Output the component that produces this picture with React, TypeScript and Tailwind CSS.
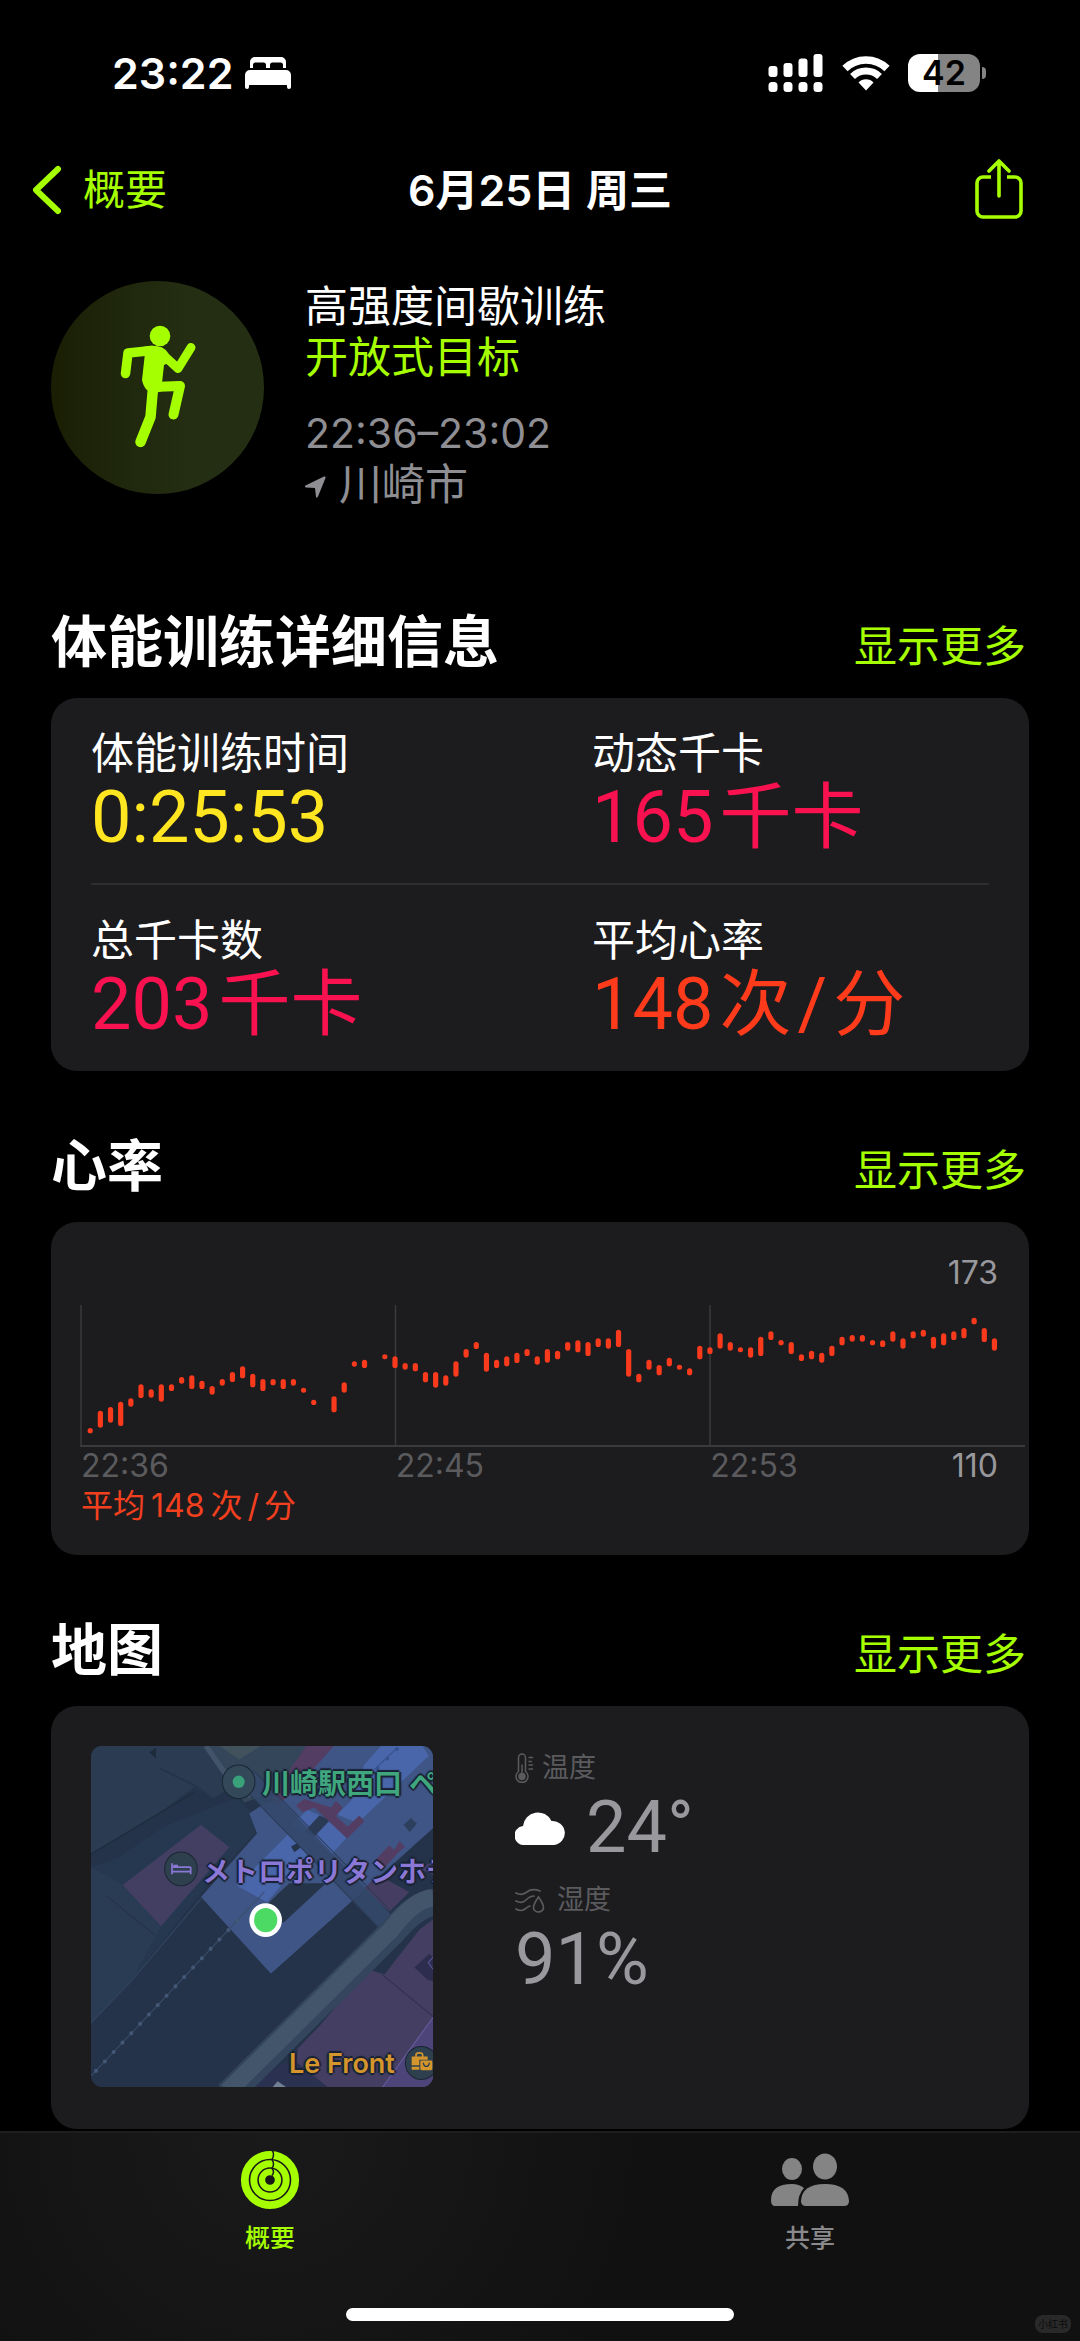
import React from "react";

/* Heart-rate ranges per sample: [top, bottom] in chart units; null marks a missing sample. */
const SAMPLES: ([number, number] | null)[] = [
  [369, 385], [317, 368], [306, 353], [290, 363], [280, 305], [238, 279], [253, 278], [238, 290], [238, 258], [216, 236],
  [211, 252], [227, 252], [243, 269], [222, 242], [201, 231], [184, 220], [206, 247], [222, 258], [222, 241], [222, 252],
  [222, 242], [248, 263], [284, 300], null, [274, 322], [232, 263], [169, 185], [164, 189], null, [148, 163],
  [154, 189], [174, 194], [174, 199], [201, 232], [201, 248], [211, 242], [169, 215], [132, 158], [111, 132], [143, 200],
  [164, 189], [154, 184], [143, 174], [132, 153], [154, 179], [132, 173], [137, 163], [111, 137], [106, 142], [111, 153],
  [100, 126], [100, 131], [74, 126], [132, 215], [206, 232], [164, 194], [180, 211], [158, 184], [179, 194], [190, 211],
  [122, 163], [127, 147], [85, 131], [111, 137], [127, 142], [127, 158], [95, 153], [79, 105], [105, 121], [111, 147],
  [148, 168], [137, 163], [143, 173], [122, 153], [95, 121], [90, 110], [90, 110], [105, 121], [106, 126], [79, 110],
  [100, 131], [79, 100], [74, 95], [95, 131], [85, 121], [79, 105], [69, 100], [38, 58], [69, 111], [100, 137],
];

function BedIcon() {
  return (
    <svg viewBox="0 0 46 32" className="h-8 w-[46px]" fill="#fff" aria-hidden="true">
      <path d="M5 11V5a5 5 0 0 1 5-5h26a5 5 0 0 1 5 5v6h-3V8q0-2.500-2.500-2.500h-8Q25 5.500 25 8v3h-4V8q0-2.500-2.500-2.500h-8Q8 5.500 8 8v3z" />
      <path d="M5 13h36a5 5 0 0 1 5 5v12a2 2 0 0 1-4 0v-2H4v2a2 2 0 0 1-4 0V18a5 5 0 0 1 5-5z" />
    </svg>
  );
}

function SignalIcon() {
  return (
    <svg viewBox="0 0 56 38" className="h-[38px] w-14" fill="#fff" aria-hidden="true">
      <rect x="0.500" y="12" width="9" height="11" rx="3" />
      <rect x="15.500" y="9" width="9" height="14" rx="3" />
      <rect x="30.500" y="4.500" width="9" height="18.500" rx="3" />
      <rect x="45.500" y="0" width="9" height="23" rx="3" />
      <rect x="0.500" y="28" width="9" height="10" rx="3.500" />
      <rect x="15.500" y="28" width="9" height="10" rx="3.500" />
      <rect x="30.500" y="28" width="9" height="10" rx="3.500" />
      <rect x="45.500" y="28" width="9" height="10" rx="3.500" />
    </svg>
  );
}

function WifiIcon() {
  return (
    <svg viewBox="0 0 48 36" className="h-9 w-12" aria-hidden="true">
      <path d="M3 13.500A30 30 0 0 1 45 13.500" fill="none" stroke="#fff" strokeWidth="7.500" />
      <path d="M10.500 21.500A19.500 19.500 0 0 1 37.500 21.500" fill="none" stroke="#fff" strokeWidth="7" />
      <path d="M16.500 27.500A10.500 10.500 0 0 1 31.500 27.500L24 35.500z" fill="#fff" />
    </svg>
  );
}

function Battery() {
  return (
    <div className="flex items-center gap-[2px]">
      <div className="flex h-[38px] w-[72px] items-center justify-center rounded-[12px] bg-[linear-gradient(90deg,#fff_42%,#848484_42%)] text-[34px] leading-[38px] font-semibold text-black">
        42
      </div>
      <div className="h-3 w-1 rounded-r-full bg-[#848484]" />
    </div>
  );
}

function Runner() {
  return (
    <svg viewBox="0 0 213 213" className="size-full" fill="none" stroke="#a6ff00" strokeLinecap="round" strokeLinejoin="round" aria-hidden="true">
      <circle cx="109" cy="55" r="10.300" fill="#a6ff00" stroke="none" />
      <path d="M74.500 92.500L77 72L101 69.500" strokeWidth="9.500" />
      <path d="M109 71L127 87.500L140 66.500" strokeWidth="9" />
      <path d="M92 66q19-4 25 6l5 8-9 4-2 18q8 6-3 9-14 3-17-12l3-27z" fill="#a6ff00" stroke="none" />
      <path d="M101 106L129 105L122.500 133.500" strokeWidth="10" />
      <path d="M102 107L99.500 136L89.500 161" strokeWidth="10.500" />
    </svg>
  );
}

type StatProps = { label: string; value: React.ReactNode; color: string };

function Stat({ label, value, color }: StatProps) {
  return (
    <div className="pt-[30px] pb-[25px]">
      <dt className="text-[43px] leading-[50px]">{label}</dt>
      <dd className={"font-[Roboto,'Noto_Sans_CJK_SC',sans-serif] text-[72px] leading-[80px] whitespace-nowrap " + color}>{value}</dd>
    </div>
  );
}

function Section({ title, children }: { title: string; children: React.ReactNode }) {
  return (
    <section className="px-[51px] pt-[55px]">
      <div className="flex items-baseline justify-between pb-4">
        <h2 className="text-[56px] leading-[80px] font-semibold">{title}</h2>
        <a href="#more" className="pr-[3px] text-[43px] leading-[50px] text-[#a6ff00]">显示更多</a>
      </div>
      <div className="rounded-[26px] bg-[#1c1c1e]">{children}</div>
    </section>
  );
}

function HeartChart() {
  return (
    <svg viewBox="0 0 945 142" className="block h-auto w-full" role="img" aria-label="心率">
      <path d="M1 0V142M315.500 0V142M630 0V142" stroke="#3a3a3c" strokeWidth="1.500" />
      <path d="M0 141H945" stroke="#3a3a3c" strokeWidth="2" />
      {SAMPLES.map((s, i) =>
        s ? (
          <rect key={i} x={7.6 + i * 10.16} y={s[0] / 3} width={5.200} height={(s[1] - s[0]) / 3} rx={2.600} fill="#fa3a1c" />
        ) : null,
      )}
    </svg>
  );
}

const LABEL_EDGE = "[text-shadow:2px_0_1px_#182232,-2px_0_1px_#182232,0_2px_1px_#182232,0_-2px_1px_#182232]";

function CityMap() {
  return (
    <div className="relative h-[341px] w-[342px] shrink-0 overflow-hidden rounded-[11px] bg-[#243349]">
      <svg viewBox="180 426 1026 991" preserveAspectRatio="none" className="absolute inset-0 size-full" aria-hidden="true">
        <path d="M180 426H530L600 545 545 580 490 545 380 625 180 740z" fill="#2b3c52" />
        <path d="M180 740L490 560" stroke="#202d3f" strokeWidth="4" />
        <path d="M385 490L500 545 545 582 650 530" fill="none" stroke="#243448" strokeWidth="5" />
        <path d="M530 426H830L730 560 640 590 600 540z" fill="#33465a" />
        <path d="M565 426H690L625 465z" fill="#42525c" />
        <path d="M525 426L600 530 660 570" fill="none" stroke="#42546a" strokeWidth="16" />
        <path d="M355 445L375 430V462z" fill="#1e2b3c" />
        <path d="M180 778L255 755 275 830 390 950 405 945 480 880 300 1110 180 1230z" fill="#2a3c54" />
        <path d="M180 778L255 755 400 660 620 575 680 640 670 680 500 865 300 1110 390 950 275 830z" fill="#263850" />
        <path d="M180 1230L300 1110 510 870" fill="none" stroke="#31435c" strokeWidth="4" />
        <path d="M225 860L370 975" stroke="#233247" strokeWidth="3" />
        <path d="M510 655L595 720 390 950 275 830z" fill="#433f63" />
        <path d="M510 865L678 680 655 622 690 600 740 580 860 426H1206V665L720 1088z" fill="#3f5585" />
        <path d="M712 882L775 825 885 825 762 935 745 945z" fill="#263449" />
        <path d="M618 832L772 682 835 735 708 880z" fill="#4966ab" />
        <path d="M780 655L830 612 868 628 820 675z" fill="#4966ab" />
        <path d="M845 692L895 645 948 692 900 742z" fill="#4966ab" />
        <path d="M918 625L960 585 1000 480 1050 426H1175L1193 455 980 650z" fill="#4966ab" />
        <path d="M820 675L865 628 897 640 850 690z" fill="#2a3a55" />
        <path d="M780 718L800 708 808 722 790 735z" fill="#263449" />
        <path d="M1118 655L1140 635 1158 652 1136 676z" fill="#2c3f5c" />
        <path d="M825 426H908L800 545 740 600 720 575z" fill="#533d62" />
        <path d="M795 600L820 580 900 605 915 585 935 605 915 630 950 660 985 628 1000 645 948 695 850 605 815 618z" fill="#533d62" />
        <path d="M1030 760L1075 715 1090 728 1105 702 1122 718 1100 738 1060 780z" fill="#533d62" />
        <path d="M1206 710L1165 735 1135 770 1206 800z" fill="#463f6a" />
        <path d="M1206 672L720 1088 800 1090 1010 880 1206 760z" fill="#243349" />
        <path d="M1000 840L1040 800 1135 850 1075 908z" fill="#463e62" />
        <path d="M640 510L1110 985" stroke="#34486b" strokeOpacity=".9" strokeWidth="54" />
        <path d="M618 530L1085 995M665 495L1135 960" stroke="#2a3b55" strokeWidth="3" />
        <path d="M1206 930L1165 960 1060 1090 1010 1075 870 1235 800 1305 790 1417H1206z" fill="#433e62" />
        <path d="M790 1340L700 1370 660 1417H890z" fill="#2b3150" />
        <path d="M740 1400L765 1417H725z" fill="#718092" />
        <path d="M1206 1215L1055 1417H1206z" fill="#4d4479" />
        <path d="M1206 1215L1055 1417" stroke="#6a5fa0" strokeWidth="3" />
        <path d="M1055 1092L1206 1212" stroke="#322e50" strokeWidth="3" />
        <path d="M1150 1070L1195 1030 1206 1040V1110L1190 1105z" fill="#2d2e4f" />
        <path d="M1206 1040L1192 1055 1206 1075" fill="none" stroke="#5d57a0" strokeWidth="3" />
        <path d="M590 1440L1085 965Q1150 890 1206 880" fill="none" stroke="#34465d" strokeWidth="80" />
        <path d="M590 1430L1080 960Q1150 870 1206 868" fill="none" stroke="#43556a" strokeWidth="52" />
        <path d="M180 1385L700 850" stroke="#3a4e6b" strokeWidth="3" />
        <path d="M195 1370L620 932" stroke="#435876" strokeWidth="12" strokeLinecap="round" strokeDasharray="0 38" />
        <path d="M960 560L1100 430" stroke="#35508c" strokeWidth="3" />
        <path d="M1040 490L1105 428" stroke="#35508c" strokeWidth="11" strokeLinecap="round" strokeDasharray="0 40" />
        <circle cx="623" cy="530" r="49" fill="#334859" stroke="#1a2633" strokeWidth="3" />
        <circle cx="623" cy="530" r="18" fill="#3aa27a" />
        <circle cx="450" cy="783" r="49" fill="#2e404e" stroke="#1a2633" strokeWidth="3" />
        <path d="M423 767V799M423 778H479M423 791H479M479 778V799" fill="none" stroke="#8b77d6" strokeWidth="5" />
        <path d="M427 771H441V778H427z" fill="#8b77d6" />
        <circle cx="1171" cy="1347" r="48" fill="#2e404e" stroke="#1a2633" strokeWidth="3" />
        <path d="M1142 1328H1190V1338H1165V1354H1142zM1142 1358H1165V1367H1142z" fill="#d4952c" />
        <path d="M1155 1330V1324Q1155 1318 1165 1318T1175 1324V1330" fill="none" stroke="#d4952c" strokeWidth="5" />
        <rect x="1168" y="1340" width="36" height="28" rx="4" fill="#d4952c" />
        <path d="M1177 1346Q1178 1357 1186 1357T1195 1346" fill="none" stroke="#2e404e" strokeWidth="4" />
        <circle cx="704" cy="932" r="49" fill="#fff" />
        <circle cx="704" cy="932" r="35" fill="#4cd964" />
      </svg>
      <span className={"absolute top-[18px] left-[171px] text-[28px] leading-10 font-semibold whitespace-nowrap text-[#3fa67e] " + LABEL_EDGE}>川崎駅西口 ペ</span>
      <span className={"absolute top-[106px] left-[111px] text-[28px] leading-10 font-semibold whitespace-nowrap text-[#8b77d6] " + LABEL_EDGE}>メトロポリタンホテ</span>
      <span className={"absolute top-[298px] left-[198px] text-[27px] leading-10 font-semibold whitespace-nowrap text-[#d4952c] " + LABEL_EDGE}>Le Front</span>
    </div>
  );
}

function ThermometerIcon() {
  return (
    <svg viewBox="0 0 19 30" className="h-[30px] w-[19px]" fill="none" stroke="#5b5b5e" strokeWidth="1.500" strokeLinecap="round" aria-hidden="true">
      <path d="M3.500 18.500V4.500a3.500 3.500 0 0 1 7 0v14a6 6 0 1 1-7 0z" />
      <circle cx="7" cy="23.500" r="3" fill="#5b5b5e" />
      <path d="M7 20V12M14 4.500h3.500M14 8.500h2.500M14 12h3.500M14 16h3.500" />
    </svg>
  );
}

function HumidityIcon() {
  return (
    <svg viewBox="0 0 30 26" className="h-[26px] w-[30px]" fill="none" stroke="#5b5b5e" strokeWidth="1.700" strokeLinecap="round" aria-hidden="true">
      <path d="M1 6q6 3 11-1t13-1M1 14q6 3 10-1t8-4M1 22q5 3 9 0t5-3" />
      <path d="M23.500 10q-5 7-5 10.500a5 4.500 0 0 0 10 0Q28.500 17 23.500 10z" />
    </svg>
  );
}

export default function App() {
  return (
    <div lang="zh-CN" className="relative flex min-h-screen flex-col bg-black font-[Inter,'Noto_Sans_CJK_SC',sans-serif] text-white">
      <div className="flex items-center justify-between pt-11 pr-[94px] pl-[112px] leading-[58px]">
        <div className="flex items-center gap-3">
          <span className="text-[43px] font-semibold">23:22</span>
          <BedIcon />
        </div>
        <div className="flex items-center gap-[18px]">
          <SignalIcon />
          <WifiIcon />
          <Battery />
        </div>
      </div>

      <header className="mt-10 grid h-24 grid-cols-[1fr_auto_1fr] items-center px-8">
        <a href="#summary" className="flex items-center gap-[21px] text-[42px] leading-[50px] text-[#a6ff00]">
          <svg viewBox="0 0 30 50" className="h-[50px] w-[30px]" fill="none" stroke="#a6ff00" strokeWidth="6" strokeLinecap="round" strokeLinejoin="round" aria-hidden="true">
            <path d="M26 4L4 25 26 46" />
          </svg>
          概要
        </a>
        <h1 className="text-[43px] leading-[50px] font-semibold">6月25日 周三</h1>
        <button type="button" aria-label="共享体能训练" className="mr-6 justify-self-end">
          <svg viewBox="0 0 50 62" className="h-[62px] w-[50px]" fill="none" stroke="#a6ff00" strokeWidth="3.600" strokeLinecap="round" strokeLinejoin="round" aria-hidden="true">
            <path d="M17 18H9a6 6 0 0 0-6 6v28a6 6 0 0 0 6 6h32a6 6 0 0 0 6-6V24a6 6 0 0 0-6-6h-8" strokeLinecap="butt" />
            <path d="M25 37V2M15 12L25 2 35 12" />
          </svg>
        </button>
      </header>

      <main>
        <div className="flex gap-[41px] px-[51px] pt-[43px]">
          <div className="size-[213px] shrink-0 rounded-full bg-[linear-gradient(90deg,#1a1f04,#242e13_65%)]">
            <Runner />
          </div>
          <div className="text-[43px] leading-[51px]">
            <p>高强度间歇训练</p>
            <p className="text-[#a6ff00]">开放式目标</p>
            <p className="pt-[25px] text-[41px] text-[#8e8e93]">22:36–23:02</p>
            <p className="flex items-center gap-[13px] text-[#8e8e93]">
              <svg viewBox="0 0 21 22" className="mt-1 h-[22px] w-[21px]" fill="#8e8e93" aria-hidden="true">
                <path d="M19 .5Q21 0 20.500 2L13 20.500q-1 2-2 .5L10 12 1 11.500q-2-.5-.5-2z" />
              </svg>
              川崎市
            </p>
          </div>
        </div>

        <div className="pt-[37px]">
          <Section title="体能训练详细信息">
            <dl className="px-10 pb-px">
              <div className="grid grid-cols-2 gap-x-26 border-b-2 border-[#2e2e30]">
                <Stat label="体能训练时间" value="0:25:53" color="text-[#ffe620]" />
                <Stat label="动态千卡" value={<>165<span className="ml-[6px]">千卡</span></>} color="text-[#fa114f]" />
              </div>
              <div className="grid grid-cols-2 gap-x-26">
                <Stat label="总千卡数" value={<>203<span className="ml-[6px]">千卡</span></>} color="text-[#fa114f]" />
                <Stat
                  label="平均心率"
                  value={<>148<span className="ml-[6px]">次</span><span className="mx-[6px]">/</span>分</>}
                  color="text-[#ff3b1c]"
                />
              </div>
            </dl>
          </Section>
        </div>

        <Section title="心率">
          <div className="pt-[31px] pr-1 pb-7 pl-[29px]">
            <p className="pr-[27px] pb-3 text-right text-[32px] leading-10 text-[#98989d]">173</p>
            <HeartChart />
            <div className="grid grid-cols-3 pl-px text-[32px] leading-[38px] text-[#5b5b5e]">
              <span>22:36</span>
              <span>22:45</span>
              <span className="flex justify-between pr-[27px]">
                22:53
                <span className="text-[#98989d]">110</span>
              </span>
            </div>
            <p className="pl-px text-[32px] leading-[42px] text-[#f2401f]">
              平均<span className="mx-[6px]">148</span>次<span className="mx-[5px]">/</span>分
            </p>
          </div>
        </Section>

        <Section title="地图">
          <div className="flex gap-[82px] px-10 pt-10 pb-[42px]">
            <CityMap />
            <dl className="flex flex-col pt-[2px] text-[27px] leading-10 text-[#5b5b5e]">
              <dt className="flex items-center gap-2">
                <ThermometerIcon />
                温度
              </dt>
              <dd className="flex items-center gap-5 font-[Roboto,sans-serif] text-[72px] leading-[80px] text-[#98989d]">
                <svg viewBox="0 0 51 34" className="h-[34px] w-[51px]" fill="#fff" aria-hidden="true">
                  <path d="M10 34a9.500 9.500 0 0 1-2-19A15 15 0 0 1 36.500 10 12 12 0 0 1 39 34z" />
                </svg>
                24°
              </dd>
              <dt className="mt-3 flex items-center gap-3">
                <HumidityIcon />
                湿度
              </dt>
              <dd className="font-[Roboto,sans-serif] text-[72px] leading-[80px] text-[#98989d]">91%</dd>
            </dl>
          </div>
        </Section>
      </main>

      <footer className="relative mt-[2px] flex grow flex-col justify-between border-t-2 border-[#1e1e1f] bg-[radial-gradient(circle_at_25%_0%,#1a1a1b,#111112_45%)] pb-5">
        <nav className="grid grid-cols-2 pt-[17px] text-[25px] leading-9 font-medium">
          <a href="#summary" className="flex flex-col items-center gap-[10px] text-[#a6ff00]">
            <svg viewBox="0 0 60 60" className="size-[60px]" fill="none" aria-hidden="true">
              <circle cx="30" cy="30" r="25.200" stroke="#a6ff00" strokeWidth="7.800" />
              <circle cx="30" cy="30" r="16.200" stroke="#a6ff00" strokeWidth="7" />
              <circle cx="30" cy="30" r="8" stroke="#a6ff00" strokeWidth="6.300" />
              <path d="M32 0q3 4.500 0 9.500M32 9.500q3 4.500 0 9M32 18.500q3 3.500 0 7" stroke="#17191a" strokeWidth="1.500" />
            </svg>
            概要
          </a>
          <a href="#sharing" className="flex flex-col items-center gap-[10px] text-[#8a8a8c]">
            <svg viewBox="0 0 78 60" className="h-[60px] w-[78px]" fill="#848484" aria-hidden="true">
              <ellipse cx="21" cy="19" rx="10" ry="11" />
              <ellipse cx="54" cy="16.500" rx="12" ry="13" />
              <path d="M0 50Q0 34 21 34q7 0 12 4-6 6-6 18H4q-4 0-4-6z" />
              <path d="M30 51q1-17 24-17t24 17q0 5-5 5H35q-5 0-5-5z" />
            </svg>
            共享
          </a>
        </nav>
        <div className="mx-auto h-[13px] w-[36%] rounded-full bg-white" />
        <span className="absolute right-[9px] bottom-[8px] rounded-[8px] bg-[#29292a] px-[3px] text-[10px] leading-[18px] text-[#0c0c0c]">小红书</span>
      </footer>
    </div>
  );
}
